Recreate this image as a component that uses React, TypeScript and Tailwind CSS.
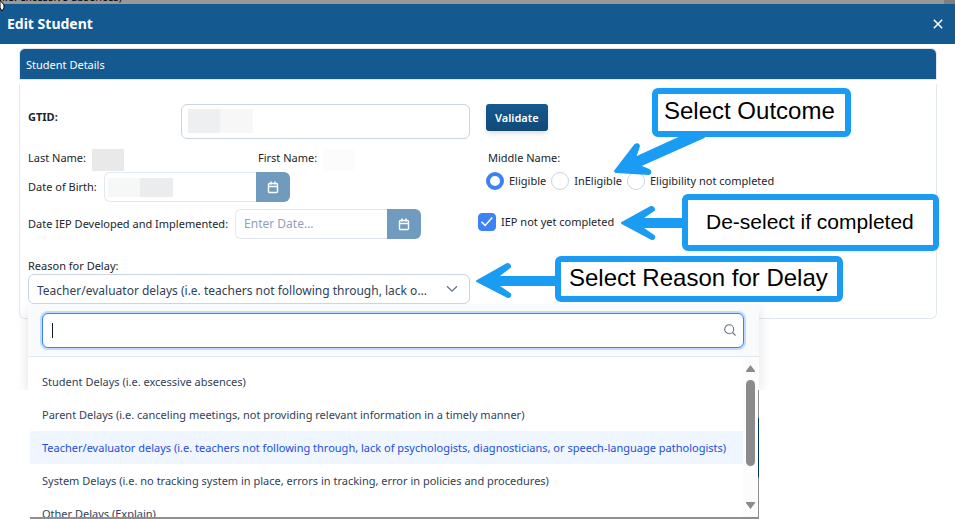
import React, { useState } from 'react';

const REASONS = [
  'Student Delays (i.e. excessive absences)',
  'Parent Delays (i.e. canceling meetings, not providing relevant information in a timely manner)',
  'Teacher/evaluator delays (i.e. teachers not following through, lack of psychologists, diagnosticians, or speech-language pathologists)',
  'System Delays (i.e. no tracking system in place, errors in tracking, error in policies and procedures)',
  'Other Delays (Explain)',
];

const OUTCOMES = ['Eligible', 'InEligible', 'Eligibility not completed'];

const CalendarIcon = () => (
  <svg viewBox="0 0 12 13" className="w-3 h-[13px]" fill="none" stroke="white" strokeWidth="1.4" aria-hidden="true">
    <rect x="1.5" y="2.5" width="9" height="9" rx="1" />
    <path d="M1.5 5.5h9M4 0.5v3M8 0.5v3" />
  </svg>
);

const DateField: React.FC<{ id: string; placeholder?: string; children?: React.ReactNode }> = ({ id, placeholder, children }) => (
  <div className="relative flex h-[30px]">
    <input
      id={id}
      type="text"
      placeholder={placeholder}
      className="w-[152px] bg-white border border-r-0 border-slate-200 rounded-l-md px-2 text-xs placeholder:text-slate-400 focus:outline-none"
    />
    <button type="button" aria-label="Choose date" className="w-[34px] flex items-center justify-center bg-[#719bbe] rounded-r-md">
      <CalendarIcon />
    </button>
    {children}
  </div>
);

const App: React.FC = () => {
  const [outcome, setOutcome] = useState('Eligible');
  const [notCompleted, setNotCompleted] = useState(true);
  const [reason, setReason] = useState(REASONS[2]);
  const [search, setSearch] = useState('');

  const visibleReasons = REASONS.filter(r => r.toLowerCase().includes(search.toLowerCase()));

  return (
    <div className="relative min-h-screen bg-white text-[11px] leading-4 text-[#212529] font-['Noto_Sans',sans-serif]">
      <div className="relative flex items-end h-1 bg-[#999] overflow-hidden">
        <span className="pl-0.5 -mb-px text-black">i.e. excessive absences)</span>
        <span className="ml-auto w-[11px] h-1 bg-[#7f7f7f]" />
      </div>

      <header className="flex items-center justify-between h-10 pl-[7px] pr-3 bg-[#14598f] text-white">
        <h1 className="text-sm font-bold">Edit Student</h1>
        <button type="button" aria-label="Close">
          <svg viewBox="0 0 10 10" className="w-[10px] h-[10px]" stroke="white" strokeWidth="1.5" aria-hidden="true">
            <path d="M0.8 0.8l8.4 8.4M9.2 0.8L0.8 9.2" />
          </svg>
        </button>
      </header>

      <main className="pt-1 pl-[19px] pr-[18px]">
        <h2 className="flex items-center h-8 px-1.5 pt-0.5 bg-[#14598f] border border-slate-200 rounded-t-md text-white">Student Details</h2>

        <form className="mt-1 pt-5 pb-[14px] border border-t-0 border-slate-200 rounded-b-md" onSubmit={e => e.preventDefault()}>
          <div className="grid grid-cols-12">
            <label htmlFor="gtid" className="col-span-2 pl-2 pt-[5px] font-bold">GTID:</label>
            <div className="relative col-span-4 px-2">
              <input id="gtid" type="text" className="w-full h-[35px] border border-slate-300 rounded-md px-2 focus:outline-none" />
              <div className="absolute left-[15px] top-[5px] flex">
                <span className="w-8 h-6 bg-[#eeeff1]" />
                <span className="w-[33px] h-6 bg-[#f7f7f7]" />
              </div>
            </div>
            <div className="col-span-6 pl-2">
              <button type="button" className="h-[27px] px-[9px] rounded-[3px] bg-linear-to-b from-[#155a90] to-[#104a78] text-white font-semibold shadow-md">Validate</button>
            </div>
          </div>

          <div className="grid grid-cols-2 mt-[10px]">
            <div className="pl-2">
              <div className="grid grid-cols-2 h-[22px]">
                <div className="flex">
                  <span className="pt-px">Last Name:</span>
                  <span className="ml-1.5 w-8 h-[22px] bg-[#e9e9e9]" />
                </div>
                <div className="flex pl-[5px]">
                  <span className="pt-px">First Name:</span>
                  <span className="ml-[5px] w-8 h-[22px] bg-[#fcfcfc]" />
                </div>
              </div>
              <div className="flex items-center gap-[7px] mt-px">
                <label htmlFor="dob">Date of Birth:</label>
                <DateField id="dob">
                  <div className="absolute left-1 top-[6px] flex">
                    <span className="w-8 h-[19px] bg-[#f6f8f8]" />
                    <span className="w-[33px] h-[19px] bg-[#ebecee]" />
                  </div>
                </DateField>
              </div>
            </div>

            <div className="pl-2">
              <div className="pl-0.5 pt-px">Middle Name:</div>
              <div className="flex items-center gap-[5px] mt-1.5">
                {OUTCOMES.map(o => (
                  <label key={o} className="flex items-center gap-[5px]">
                    <input
                      type="radio"
                      name="outcome"
                      checked={outcome === o}
                      onChange={() => setOutcome(o)}
                      className="appearance-none w-[18px] h-[18px] rounded-full border border-slate-300 bg-white checked:border-4 checked:border-[#3b82f6]"
                    />
                    {o}
                  </label>
                ))}
              </div>
            </div>
          </div>

          <div className="grid grid-cols-2 mt-[7px]">
            <div className="flex items-center gap-[7px] pl-2">
              <label htmlFor="iep-date">Date IEP Developed and Implemented:</label>
              <DateField id="iep-date" placeholder="Enter Date..." />
            </div>
            <label className="flex items-center gap-[5px] self-start pt-1">
              <span className="relative flex">
                <input
                  type="checkbox"
                  checked={notCompleted}
                  onChange={e => setNotCompleted(e.target.checked)}
                  className="appearance-none w-[18px] h-[18px] rounded border border-slate-300 checked:bg-[#3b82f6] checked:border-[#3b82f6]"
                />
                {notCompleted && (
                  <svg viewBox="0 0 18 18" className="absolute inset-0 pointer-events-none" fill="none" stroke="white" strokeWidth="1.5" aria-hidden="true">
                    <path d="M3.5 8.8l3.6 3.6 7.2-7.8" />
                  </svg>
                )}
              </span>
              IEP not yet completed
            </label>
          </div>

          <div className="grid grid-cols-2 mt-[19px]">
            <div className="px-2">
              <label htmlFor="reason" className="block">Reason for Delay:</label>
              <div className="relative">
                <select
                  id="reason"
                  value={reason}
                  onChange={e => setReason(e.target.value)}
                  className="appearance-none block w-full h-[30px] pl-2 pr-10 pt-1 border border-slate-300 rounded-md bg-white text-xs text-slate-700 text-ellipsis overflow-hidden whitespace-nowrap focus:outline-none"
                >
                  {REASONS.map(r => <option key={r} value={r}>{r}</option>)}
                </select>
                <svg viewBox="0 0 12 8" className="absolute right-3 top-[11px] w-3 h-2 pointer-events-none" fill="none" stroke="#64748b" strokeWidth="1.3" aria-hidden="true">
                  <path d="M1 1.2l5 5 5-5" />
                </svg>

                <div className="absolute top-full left-0 z-10 w-[731px]">
                  <div className="absolute top-0 inset-x-0 h-[86px] shadow-[0_4px_12px_rgba(0,0,0,0.12)] [clip-path:inset(0_-12px_0_-12px)]" />
                  <div className="relative h-[53px] pl-[14px] pr-[15px] py-[9px] bg-slate-50 border-b border-slate-200">
                    <input
                      type="text"
                      aria-label="Search reasons"
                      value={search}
                      onChange={e => setSearch(e.target.value)}
                      className="block w-full h-[35px] px-[10px] pr-8 bg-white border border-[#3b82f6] rounded-md ring-2 ring-[#bfdbfe] caret-transparent focus:outline-none"
                    />
                    <span className="absolute left-6 top-[19px] w-px h-[15px] bg-slate-900" />
                    <svg viewBox="0 0 12 12" className="absolute right-[23px] top-[20px] w-3 h-3" fill="none" stroke="#64748b" strokeWidth="1.1" aria-hidden="true">
                      <circle cx="5.2" cy="5.2" r="4.5" />
                      <path d="M8.5 8.5l3 3" />
                    </svg>
                  </div>

                  <div className="relative flex h-[162px] ml-0.5 border-b-2 border-[#8f8f8f] bg-white overflow-hidden">
                    <ul className="flex-1 pt-2 text-slate-700">
                      {visibleReasons.map(r => (
                        <li key={r}>
                          <button
                            type="button"
                            onClick={() => setReason(r)}
                            className={`block w-full h-[33px] px-3 text-left whitespace-nowrap ${r === reason ? 'bg-[#eff6ff] text-[#1d4ed8]' : ''}`}
                          >
                            {r}
                          </button>
                        </li>
                      ))}
                    </ul>
                    <div className="flex flex-col items-center w-[15px] pt-2 pb-2 bg-[#fcfcfc]">
                      <svg viewBox="0 0 9 7" className="w-[9px] h-[7px]" fill="#8b8b8b" aria-hidden="true">
                        <path d="M4.5 0L9 6v1H0V6z" />
                      </svg>
                      <span className="mt-2 w-[9px] h-[86px] rounded-full bg-[#8b8b8b]" />
                      <svg viewBox="0 0 9 7" className="mt-auto w-[9px] h-[7px]" fill="#8b8b8b" aria-hidden="true">
                        <path d="M4.5 7L9 1V0H0v1z" />
                      </svg>
                    </div>
                    <div className="flex flex-col w-px pt-[33px]">
                      <span className="h-7 bg-[#8f8f8f]" />
                      <span className="h-[59px] bg-[#003355]" />
                      <span className="flex-1 bg-[#8f8f8f]" />
                    </div>
                  </div>
                </div>
              </div>
            </div>
          </div>
        </form>
      </main>

      {/* help callouts laid over the form */}
      <svg viewBox="0 0 955 519" className="absolute top-0 left-0 z-20 w-[955px] h-[519px] pointer-events-none" fill="#1b9cf4" stroke="#1b9cf4" strokeWidth="2" strokeLinejoin="round" aria-hidden="true">
        <path d="M615 171L635 145Q638 143 639 146L635 158L681 137H704L639 166L649 170Q652 172 649 174L616 172Z" />
        <path d="M622 223L651 207Q654 207 654 210L641 219H684V227H641L654 236Q655 239 652 239Z" />
        <path d="M477 281L507 264Q510 264 510 267L497 277H557V285H497L510 294Q511 297 508 297Z" />
        <path d="M0 0L4 5V8L2 11L0 8Z" fill="white" stroke="black" strokeWidth="1" />
      </svg>
      <div className="absolute left-[652px] top-[88px] z-20 w-[199px] h-[49px] flex items-center pl-1.5 pb-1 bg-white border-[6px] border-[#1b9cf4] rounded-md font-['Liberation_Sans',sans-serif] text-2xl text-black whitespace-nowrap">
        Select Outcome
      </div>
      <div className="absolute left-[682px] top-[194px] z-20 w-[257px] h-[57px] flex items-center pl-[18px] pb-0.5 bg-white border-[6px] border-[#1b9cf4] rounded-md font-['Liberation_Sans',sans-serif] text-[21px] text-black whitespace-nowrap">
        De-select if completed
      </div>
      <div className="absolute left-[555px] top-[256px] z-20 w-[288px] h-[46px] flex items-center pl-2 pb-0.5 bg-white border-[6px] border-[#1b9cf4] rounded-md font-['Liberation_Sans',sans-serif] text-2xl text-black whitespace-nowrap">
        Select Reason for Delay
      </div>
    </div>
  );
};

export default App;
